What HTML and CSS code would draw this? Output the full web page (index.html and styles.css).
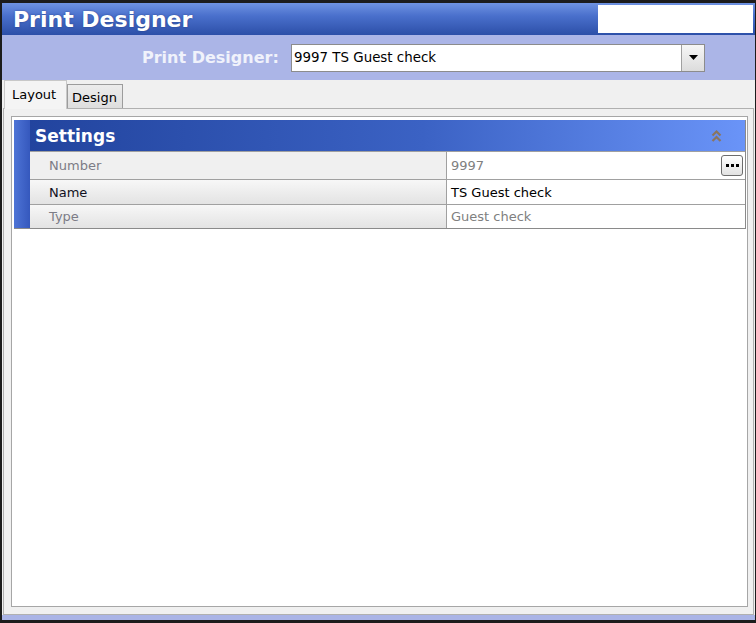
FILE: index.html
```html
<!DOCTYPE html>
<html>
<head>
<meta charset="utf-8">
<link rel="stylesheet" href="styles.css">
</head>
<body>
<div class="window">
  <div class="titlebar">
    <h1 class="title">Print Designer</h1>
    <div class="title-box"></div>
  </div>
  <div class="selector-bar">
    <span class="selector-label">Print Designer:</span>
    <div class="combo">
      <span class="combo-text">9997 TS Guest check</span>
      <span class="combo-btn"><svg width="9" height="5" viewBox="0 0 9 5"><path d="M0 0H9L4.5 5Z" fill="#000"/></svg></span>
    </div>
  </div>
  <div class="tabs">
    <div class="tab tab-active">Layout</div>
    <div class="tab tab-inactive">Design</div>
  </div>
  <div class="page">
    <div class="sheet">
      <div class="settings">
        <div class="strip"></div>
        <div class="settings-body">
          <div class="settings-header">
            <span class="settings-title">Settings</span>
            <svg class="chevrons" width="11" height="14" viewBox="0 0 11 14"><path d="M1.5 6.5L5.5 2.5L9.5 6.5M1.5 12L5.5 8L9.5 12" fill="none" stroke="#8a7560" stroke-width="2.2"/></svg>
          </div>
          <div class="row row-number">
            <div class="cell-label muted">Number</div>
            <div class="cell-value muted">9997<span class="ellipsis"><i></i><i></i><i></i></span></div>
          </div>
          <div class="row row-name">
            <div class="cell-label">Name</div>
            <div class="cell-value">TS Guest check</div>
          </div>
          <div class="row row-type">
            <div class="cell-label muted">Type</div>
            <div class="cell-value muted">Guest check</div>
          </div>
        </div>
      </div>
    </div>
  </div>
  <div class="bottom-strip"></div>
</div>
</body>
</html>
```
FILE: styles.css
```css
html, body {
  margin: 0;
  padding: 0;
}
body {
  width: 756px;
  height: 623px;
  background: #1c1c1c;
  overflow: hidden;
  font-family: "DejaVu Sans", Verdana, sans-serif;
}
.window {
  margin: 3px 1px 3px 2px;
  height: 617px;
  display: flex;
  flex-direction: column;
  background: #f0f0f0;
}
.titlebar {
  height: 32px;
  flex: none;
  display: flex;
  align-items: stretch;
  justify-content: space-between;
  background: linear-gradient(#6f93e2, #4a70cc 40%, #2c4fa8);
  padding-left: 11px;
}
.title {
  margin: 0;
  font-size: 22px;
  font-weight: bold;
  color: #fff;
  line-height: 34px;
  text-shadow: 0 0 2px rgba(20, 40, 100, 0.6);
}
.title-box {
  width: 155px;
  margin: 2px 2px 2px 0;
  background: #fff;
}
.selector-bar {
  height: 45px;
  flex: none;
  display: flex;
  align-items: center;
  background: #abb5e7;
  padding-left: 140px;
  gap: 10px;
}
.selector-label {
  font-size: 16px;
  font-weight: bold;
  color: #f0f2fb;
  width: 139px;
}
.combo {
  width: 412px;
  height: 26px;
  border: 1px solid #8c8c8c;
  background: #fff;
  display: flex;
  align-items: stretch;
}
.combo-text {
  flex: 1;
  font-size: 13.4px;
  line-height: 26px;
  padding-left: 2px;
  color: #000;
}
.combo-btn {
  width: 22px;
  border-left: 1px solid #a0a0a0;
  background: linear-gradient(#f6f6f6, #dcdcdc);
  display: flex;
  align-items: center;
  justify-content: center;
}
.tabs {
  height: 28px;
  flex: none;
  display: flex;
  align-items: flex-end;
  padding-left: 2px;
}
.tab {
  font-size: 13px;
  color: #000;
  box-sizing: border-box;
}
.tab-active {
  height: 29px;
  margin-bottom: -1px;
  width: 63px;
  padding: 6px 0 0 7px;
  background: #f4f4f4;
  border: 1px solid #c8c8c8;
  border-bottom: none;
  position: relative;
  z-index: 1;
}
.tab-inactive {
  height: 24px;
  width: 56px;
  padding: 5px 0 0 4px;
  background: linear-gradient(#ececec, #dedede);
  border: 1px solid #9c9c9c;
  border-bottom: none;
}
.page {
  flex: 1;
  margin: 0 1px 0 1px;
  border: 1px solid #b0b0b0;
  padding: 7px 5px 7px 7px;
  display: flex;
}
.sheet {
  flex: 1;
  border: 1px solid #a6a6a6;
  background: #fff;
  padding: 3px 1px 0 2px;
}
.settings {
  display: flex;
  border: 1px solid #8a8a8a;
  border-top: none;
  border-left: none;
}
.strip {
  width: 16px;
  background: linear-gradient(to right, #4e74d6, #3558bd);
}
.settings-body {
  flex: 1;
  display: flex;
  flex-direction: column;
}
.settings-header {
  height: 31px;
  background: linear-gradient(to right, #22449e, #3b62c4 55%, #6a94f8);
  display: flex;
  align-items: center;
  justify-content: space-between;
  padding: 0 23px 0 5px;
}
.settings-title {
  font-size: 17px;
  font-weight: bold;
  color: #fff;
}
.chevrons {
  display: block;
}
.row {
  display: flex;
  border-top: 1px solid #a0a0a0;
  font-size: 13px;
}
.row-number { height: 27px; }
.row-name { height: 24px; }
.row-type { height: 23px; }
.cell-label {
  width: 397px;
  padding-left: 19px;
  border-right: 1px solid #a0a0a0;
  background: linear-gradient(#f7f7f7, #e3e3e3);
  display: flex;
  align-items: center;
  color: #111122;
}
.row-number .cell-label {
  background: #f0f0f0;
}
.cell-value {
  flex: 1;
  padding-left: 4px;
  display: flex;
  align-items: center;
  color: #000;
}
.muted {
  color: #808080;
}
.row-number .cell-label.muted, .row-type .cell-label.muted {
  color: #7c7c86;
}
.ellipsis {
  margin-left: auto;
  margin-right: 2px;
  width: 20px;
  height: 19px;
  border: 1px solid #6c6c6c;
  border-radius: 3px;
  background: linear-gradient(#ffffff, #e2e2e2);
  display: flex;
  align-items: center;
  justify-content: center;
  gap: 2px;
}
.ellipsis i {
  width: 3px;
  height: 3px;
  background: #000;
}
.bottom-strip {
  height: 5px;
  flex: none;
  background: #aab4e6;
}
```
